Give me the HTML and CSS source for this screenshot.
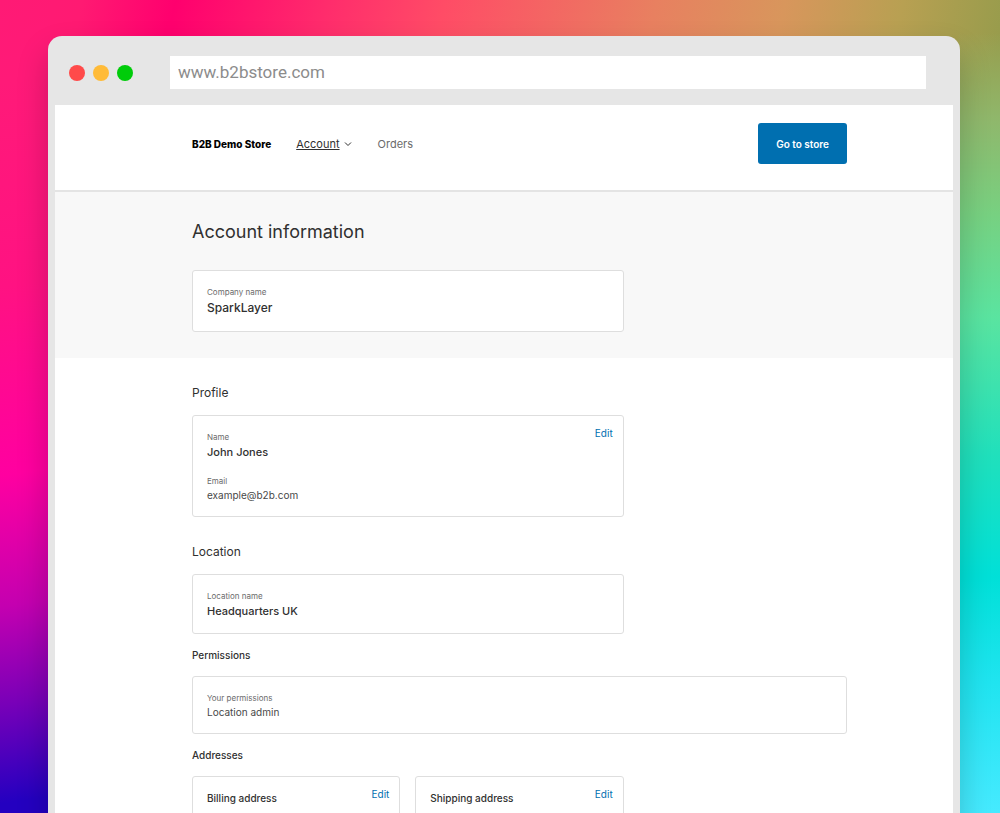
FILE: index.html
```html
<!DOCTYPE html>
<html lang="en">
<head>
  <meta charset="utf-8">
  <meta name="viewport" content="width=device-width, initial-scale=1">
  <title>Account information</title>
  <link rel="stylesheet" href="styles.css">
</head>
<body>
  <div class="backdrop">
    <div class="window">
      <div class="toolbar">
        <div class="lights">
          <span class="light light-close"></span>
          <span class="light light-minimise"></span>
          <span class="light light-zoom"></span>
        </div>
        <input class="address-bar" type="text" aria-label="Address" value="www.b2bstore.com">
      </div>
      <div class="page">
        <header class="site-header">
          <a class="brand" href="#">B2B Demo Store</a>
          <nav class="nav">
            <a class="nav-link nav-current" href="#"><span class="nav-label">Account</span>
              <svg class="chevron" viewBox="0 0 8 8" aria-hidden="true"><path d="M1 2.5 4 5.5 7 2.5"/></svg>
            </a>
            <a class="nav-link" href="#">Orders</a>
          </nav>
          <button class="store-button" type="button">Go to store</button>
        </header>
        <section class="hero">
          <h1 class="title">Account information</h1>
          <div class="grid">
            <div class="card card-wide card-stack">
              <span class="label">Company name</span>
              <strong class="value value-large">SparkLayer</strong>
            </div>
          </div>
        </section>
        <main class="content">
          <h2 class="heading">Profile</h2>
          <div class="grid">
            <div class="card card-wide card-editable">
              <div class="fields">
                <div class="field">
                  <span class="label">Name</span>
                  <strong class="value">John Jones</strong>
                </div>
                <div class="field">
                  <span class="label">Email</span>
                  <span class="detail">example@b2b.com</span>
                </div>
              </div>
              <a class="edit" href="#">Edit</a>
            </div>
          </div>
          <h2 class="heading">Location</h2>
          <div class="grid">
            <div class="card card-wide card-stack">
              <span class="label">Location name</span>
              <strong class="value">Headquarters UK</strong>
            </div>
          </div>
          <h3 class="subheading">Permissions</h3>
          <div class="card card-stack">
            <span class="label">Your permissions</span>
            <span class="detail">Location admin</span>
          </div>
          <h3 class="subheading">Addresses</h3>
          <div class="grid">
            <div class="card card-editable card-address">
              <h4 class="card-title">Billing address</h4>
              <a class="edit" href="#">Edit</a>
            </div>
            <div class="card card-editable card-address">
              <h4 class="card-title">Shipping address</h4>
              <a class="edit" href="#">Edit</a>
            </div>
          </div>
        </main>
      </div>
    </div>
  </div>
</body>
</html>
```
FILE: styles.css
```css
* {
  box-sizing: border-box;
}

body {
  margin: 0;
  font-family: Inter, "Liberation Sans", sans-serif;
  color: #303030;
}

h1, h2, h3, h4 {
  margin: 0;
}

a {
  text-decoration: none;
}

.backdrop {
  height: 100vh;
  overflow: hidden;
  padding: 36px 40px 0 48px;
  background:
    linear-gradient(172deg, rgba(255, 26, 117, 0) 0%, #ff1a78 10%, #ff1282 35%, #ff00a0 58%, #c400b0 74%, #7800b8 86%, #2400c0 98%) left / 50px 100% no-repeat,
    linear-gradient(180deg, rgba(155, 155, 75, 0) 0%, rgba(155, 160, 80, 0) 4%, #8fb86c 15%, #78d080 26%, #5ae4a0 39%, #20e0bc 56%, #00e0d8 71%, #20e4f0 84%, #46eaff 100%) right / 42px 100% no-repeat,
    linear-gradient(102deg, #ff1a75 0%, #ff1a72 7%, #ff006e 15%, #ff2c6c 28%, #ff4c66 38%, #e88060 56%, #d8965c 67%, #b8a052 77%, #989c4c 86%);
}

.window {
  min-height: 100%;
  padding: 0 7px;
  border-radius: 14px 14px 0 0;
  background: #e6e6e6;
  box-shadow: 0 16px 32px rgba(0, 0, 0, 0.2);
}

.toolbar {
  display: flex;
  align-items: center;
  gap: 37px;
  padding: 20px 27px 16px 14px;
}

.lights {
  display: flex;
  gap: 8px;
}

.light {
  width: 16px;
  height: 16px;
  border-radius: 50%;
}

.light-close {
  background: #ff4a4a;
}

.light-minimise {
  background: #ffbb38;
}

.light-zoom {
  background: #00cc0a;
}

.address-bar {
  flex: 1;
  min-width: 0;
  height: 33px;
  padding: 0 8px 2px;
  border: 0;
  background: #fff;
  color: #8c8c8c;
  font: 17px Roboto, sans-serif;
}

.page {
  background: #fff;
}

.site-header,
.hero,
.content {
  padding-left: 137px;
  padding-right: 106px;
}

.site-header {
  display: flex;
  align-items: center;
  padding-top: 18px;
  padding-bottom: 26px;
  border-bottom: 2px solid #e4e4e4;
}

.brand {
  color: #000;
  font-size: 10px;
  font-weight: 800;
}

.nav {
  display: flex;
  gap: 26px;
  margin-left: 25px;
}

.nav-link {
  display: flex;
  align-items: center;
  gap: 4px;
  color: #6b6b6b;
  font-size: 11px;
}

.nav-current {
  color: #303030;
}

.nav-label {
  text-decoration: underline;
}

.chevron {
  width: 8px;
  height: 8px;
  fill: none;
  stroke: #303030;
}

.store-button {
  height: 41px;
  margin-left: auto;
  padding: 0 18px;
  border: 0;
  border-radius: 3px;
  background: #006fb0;
  color: #fff;
  font: 600 10px Inter, sans-serif;
}

.hero {
  padding-top: 26px;
  padding-bottom: 26px;
  background: #f8f8f8;
}

.title {
  margin-bottom: 24px;
  font-size: 18px;
  font-weight: 400;
  line-height: 28px;
}

.grid {
  display: grid;
  grid-template-columns: repeat(3, 1fr);
  gap: 15px;
}

.card {
  display: flex;
  justify-content: space-between;
  align-items: flex-start;
  padding: 14px 10px 14px 14px;
  border: 1px solid #dedede;
  border-radius: 3px;
  background: #fff;
}

.card-wide {
  grid-column: span 2;
}

.card-stack {
  flex-direction: column;
  justify-content: flex-start;
}

.card-editable {
  padding-top: 10px;
}

.card-address {
  min-height: 120px;
}

.fields {
  display: grid;
  gap: 14px;
  padding-top: 4px;
}

.field {
  display: flex;
  flex-direction: column;
}

.label {
  color: #6b6b6b;
  font-size: 8px;
  line-height: 14px;
}

.value {
  font-size: 11px;
  font-weight: 500;
  line-height: 16px;
}

.value-large {
  font-size: 12px;
  line-height: 18px;
}

.detail {
  color: #484848;
  font-size: 10px;
  line-height: 14px;
}

.edit {
  color: #006fb0;
  font-size: 10px;
  line-height: 14px;
}

.heading {
  padding: 26px 0 13px;
  font-size: 12px;
  font-weight: 400;
  line-height: 18px;
}

.subheading {
  padding: 14px 0;
  font-size: 10px;
  font-weight: 500;
  line-height: 14px;
}

.card-title {
  padding-top: 4px;
  font-size: 10px;
  font-weight: 500;
  line-height: 14px;
}
```
